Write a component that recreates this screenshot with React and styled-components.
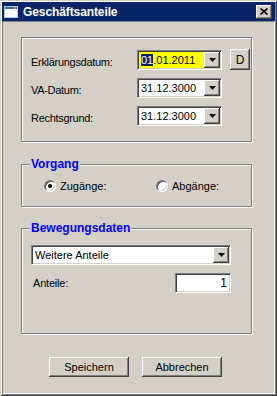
import React from 'react';
import styled, { createGlobalStyle, css } from 'styled-components';

const GlobalStyle = createGlobalStyle`
  html, body {
    margin: 0;
    padding: 0;
    background: #d4d0c8;
  }
  body {
    font-family: "Liberation Sans", Arial, sans-serif;
    font-size: 11px;
    color: #000;
  }
`;

const sunken = css`
  border: 1px solid;
  border-color: #808080 #ffffff #ffffff #808080;
  box-shadow: inset 1px 1px #404040, inset -1px -1px #d4d0c8;
`;

const raised = css`
  background: #d4d0c8;
  box-shadow: inset -1px -1px #404040, inset 1px 1px #ffffff, inset -2px -2px #808080;
`;

const Window = styled.div`
  width: 277px;
  height: 396px;
  box-sizing: border-box;
  padding: 2px;
  background: #d4d0c8;
  box-shadow: inset 1px 1px #d4d0c8, inset -1px -1px #404040,
    inset 2px 2px #ffffff, inset -2px -2px #808080;
  display: flex;
  flex-direction: column;
`;

const TitleBar = styled.div`
  height: 19px;
  flex: none;
  background: #0a246a;
  display: flex;
  align-items: center;
  padding: 0 3px 0 2px;
  color: #fff;
  font-weight: bold;
  font-size: 12px;
`;

const TitleText = styled.span`
  margin-left: 5px;
  letter-spacing: -0.1px;
`;

const CloseButton = styled.div`
  ${raised};
  margin-left: auto;
  width: 16px;
  height: 14px;
  display: flex;
  align-items: center;
  justify-content: center;
`;

const Panel = styled.div`
  flex: 1;
  border: 1px solid;
  border-color: #808080 #ffffff #ffffff #808080;
  padding: 15px 22px 0 18px;
  display: flex;
  flex-direction: column;
`;

const GroupBox = styled.div`
  position: relative;
  border: 1px solid #808080;
  box-shadow: inset 1px 1px #ffffff, 1px 1px #ffffff;
  padding: ${p => p.$pad};
  margin-top: ${p => p.$top || 0}px;
`;

const Legend = styled.span`
  position: absolute;
  top: -8px;
  left: 8px;
  padding: 0 1px;
  background: #d4d0c8;
  color: #0000ff;
  font-weight: bold;
  font-size: 12px;
  line-height: 14px;
`;

const DateGrid = styled.div`
  display: grid;
  grid-template-columns: 98px 85px 20px;
  column-gap: 8px;
  row-gap: 8px;
  align-items: center;
`;

const Label = styled.span`
  padding-top: 4px;
  letter-spacing: -0.3px;
  white-space: nowrap;
`;

const FieldLabel = styled.span`
  padding-left: 2px;
  letter-spacing: -0.2px;
`;

const ComboBox = styled.div`
  ${sunken};
  box-sizing: border-box;
  width: ${p => p.$width}px;
  height: 20px;
  padding: 1px;
  display: flex;
  background: ${p => (p.$active ? '#ffff00' : '#ffffff')};
`;

const ComboText = styled.span`
  flex: 1;
  padding-left: 2px;
  line-height: 16px;
  white-space: nowrap;
`;

const Selected = styled.span`
  background: #0a246a;
  color: #fff;
`;

const DropButton = styled.div`
  ${raised};
  width: 16px;
  height: 16px;
  display: flex;
  align-items: center;
  justify-content: center;
`;

const SmallButton = styled.div`
  ${raised};
  width: 20px;
  height: 21px;
  display: flex;
  align-items: center;
  justify-content: center;
  font-size: 12px;
`;

const RadioRow = styled.div`
  display: grid;
  grid-template-columns: 112px 112px;
  padding-left: 22px;
  height: 14px;
  align-items: center;
`;

const RadioOption = styled.label`
  display: flex;
  align-items: center;
  gap: 4px;
  font-size: 11px;
`;

const RadioCircle = styled.span`
  position: relative;
  width: 12px;
  height: 12px;
  box-sizing: border-box;
  border-radius: 50%;
  border: 1px solid;
  border-color: #808080 #ffffff #ffffff #808080;
  box-shadow: inset 1px 1px #404040, inset -1px -1px #d4d0c8;
  background: #fff;

  &::after {
    content: '';
    display: ${p => (p.$checked ? 'block' : 'none')};
    position: absolute;
    left: 3px;
    top: 3px;
    width: 4px;
    height: 4px;
    border-radius: 50%;
    background: #000;
  }
`;

const FieldRow = styled.div`
  width: 200px;
  margin-top: 8px;
  display: flex;
  justify-content: space-between;
  align-items: center;
`;

const NumberInput = styled.div`
  ${sunken};
  box-sizing: border-box;
  width: 56px;
  height: 20px;
  background: #fff;
  text-align: right;
  padding-right: 3px;
  line-height: 18px;
  font-size: 12px;
`;

const ButtonRow = styled.div`
  display: flex;
  gap: 13px;
  padding-left: 28px;
  margin-top: 23px;
`;

const PushButton = styled.div`
  ${raised};
  width: 80px;
  height: 20px;
  display: flex;
  align-items: center;
  justify-content: center;
`;

const Arrow = () => (
  <svg width="7" height="4" viewBox="0 0 7 4">
    <polygon points="0,0 7,0 3.5,4" fill="#000" />
  </svg>
);

const Combo = ({ width, active, children }) => (
  <ComboBox $width={width} $active={active}>
    <ComboText>{children}</ComboText>
    <DropButton>
      <Arrow />
    </DropButton>
  </ComboBox>
);

const App = () => (
  <>
    <GlobalStyle />
    <Window>
      <TitleBar>
        <svg width="14" height="12" viewBox="0 0 14 12">
          <rect x="0.5" y="0.5" width="13" height="11" fill="#fff" stroke="#b8c4d8" />
          <rect x="1" y="1" width="12" height="2" fill="#3a6ea5" />
          <rect x="10" y="1" width="2" height="2" fill="#f07830" />
        </svg>
        <TitleText>Geschäftsanteile</TitleText>
        <CloseButton>
          <svg width="8" height="7" viewBox="0 0 8 7">
            <path d="M0.5 0.5 L7.5 6.5 M7.5 0.5 L0.5 6.5" stroke="#000" strokeWidth="1.7" />
          </svg>
        </CloseButton>
      </TitleBar>
      <Panel>
        <GroupBox $pad="11px 9px 15px 9px">
          <DateGrid>
            <Label>Erklärungsdatum:</Label>
            <Combo width={85} active>
              <Selected>01</Selected>.01.2011
            </Combo>
            <SmallButton>D</SmallButton>
            <Label>VA-Datum:</Label>
            <Combo width={85}>31.12.3000</Combo>
            <span />
            <Label>Rechtsgrund:</Label>
            <Combo width={85}>31.12.3000</Combo>
            <span />
          </DateGrid>
        </GroupBox>

        <GroupBox $top={22} $pad="14px 0 13px 0">
          <Legend>Vorgang</Legend>
          <RadioRow>
            <RadioOption>
              <RadioCircle $checked />
              Zugänge:
            </RadioOption>
            <RadioOption>
              <RadioCircle />
              Abgänge:
            </RadioOption>
          </RadioRow>
        </GroupBox>

        <GroupBox $top={21} $pad="16px 9px 40px 9px">
          <Legend>Bewegungsdaten</Legend>
          <Combo width={200}>Weitere Anteile</Combo>
          <FieldRow>
            <FieldLabel>Anteile:</FieldLabel>
            <NumberInput>1</NumberInput>
          </FieldRow>
        </GroupBox>

        <ButtonRow>
          <PushButton>Speichern</PushButton>
          <PushButton>Abbrechen</PushButton>
        </ButtonRow>
      </Panel>
    </Window>
  </>
);

export default App;
